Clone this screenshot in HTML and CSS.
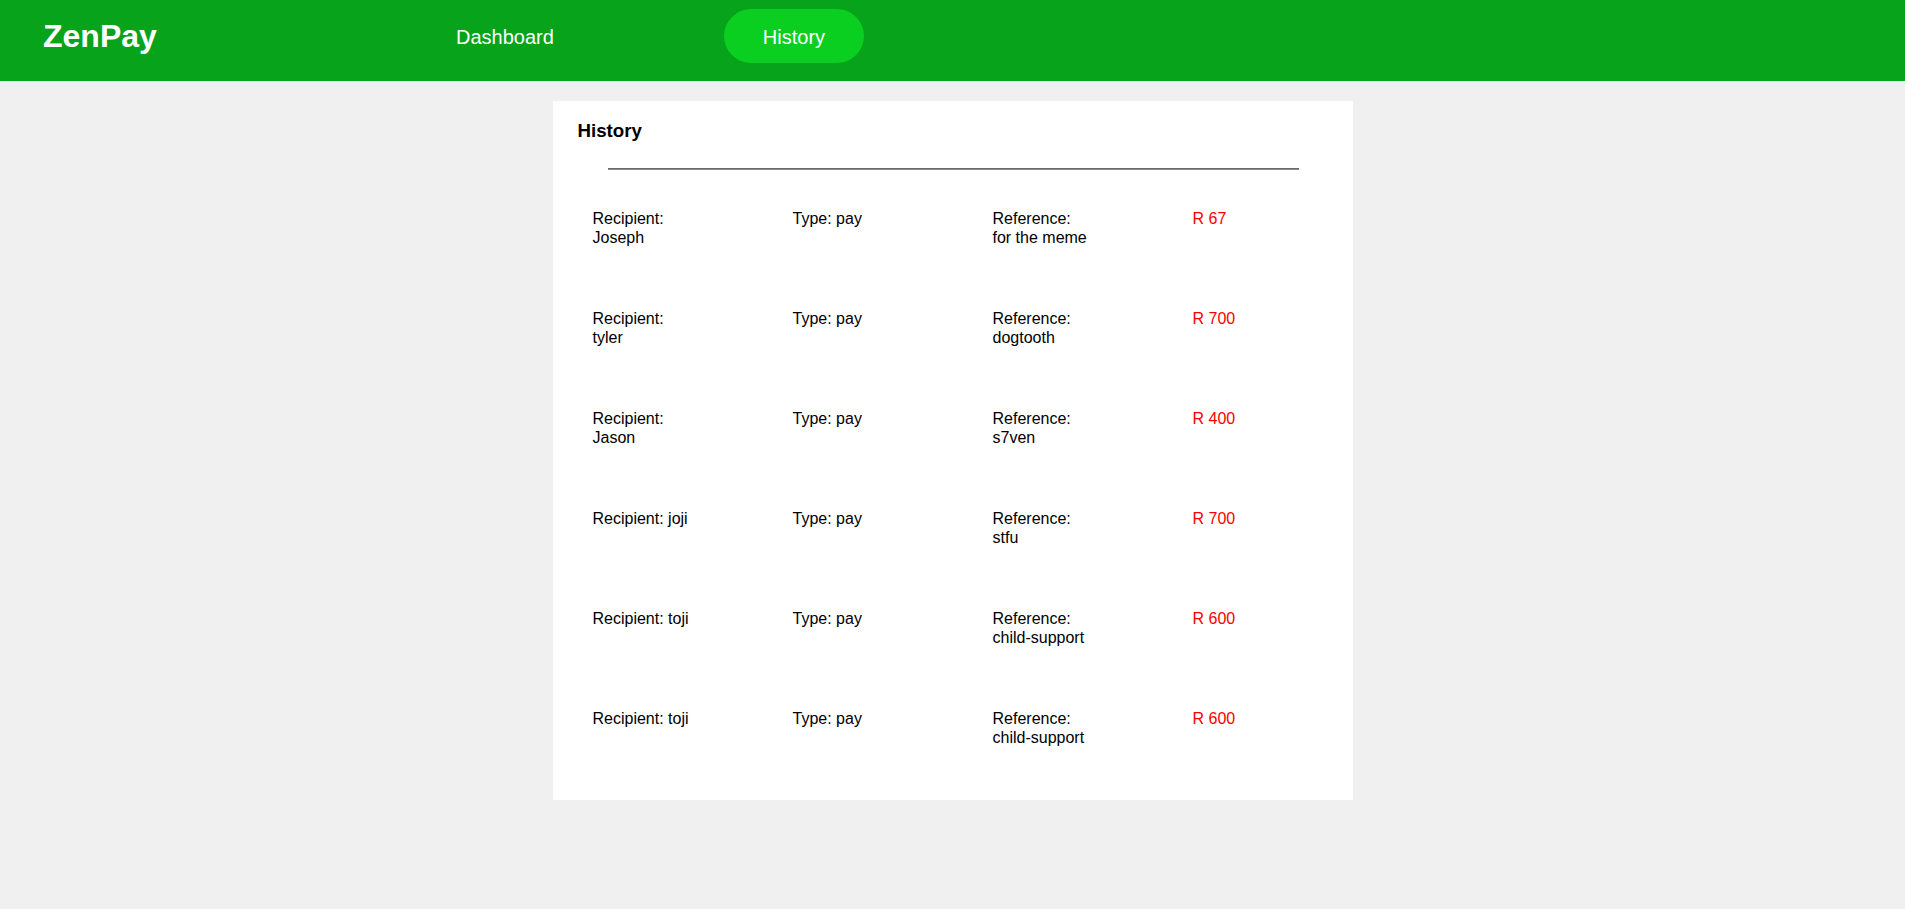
FILE: index.html
```html
<!DOCTYPE html>
<html>
<head>
<meta charset="utf-8">
<title>ZenPay - History</title>
<link rel="stylesheet" href="styles.css">
</head>
<body>
<header class="topbar">
  <div class="logo">ZenPay</div>
  <nav class="nav">
    <a class="nav-link" href="#">Dashboard</a>
    <a class="nav-link active" href="#">History</a>
  </nav>
</header>
<main class="page">
  <section class="card">
    <h3 class="card-title">History</h3>
    <div class="divider"></div>
    <div class="list">
      <div class="row">
        <div class="cell">Recipient:<br>Joseph</div>
        <div class="cell">Type: pay</div>
        <div class="cell">Reference:<br>for the meme</div>
        <div class="cell amount">R 67</div>
      </div>
      <div class="row">
        <div class="cell">Recipient:<br>tyler</div>
        <div class="cell">Type: pay</div>
        <div class="cell">Reference:<br>dogtooth</div>
        <div class="cell amount">R 700</div>
      </div>
      <div class="row">
        <div class="cell">Recipient:<br>Jason</div>
        <div class="cell">Type: pay</div>
        <div class="cell">Reference:<br>s7ven</div>
        <div class="cell amount">R 400</div>
      </div>
      <div class="row">
        <div class="cell">Recipient: joji</div>
        <div class="cell">Type: pay</div>
        <div class="cell">Reference:<br>stfu</div>
        <div class="cell amount">R 700</div>
      </div>
      <div class="row">
        <div class="cell">Recipient: toji</div>
        <div class="cell">Type: pay</div>
        <div class="cell">Reference:<br>child-support</div>
        <div class="cell amount">R 600</div>
      </div>
      <div class="row">
        <div class="cell">Recipient: toji</div>
        <div class="cell">Type: pay</div>
        <div class="cell">Reference:<br>child-support</div>
        <div class="cell amount">R 600</div>
      </div>
    </div>
  </section>
</main>
</body>
</html>
```
FILE: styles.css
```css
* { box-sizing: border-box; }
html, body {
  margin: 0;
  padding: 0;
}
body {
  background: #f0f0f0;
  font-family: "Liberation Sans", Arial, sans-serif;
  color: #000;
}
.topbar {
  background: #07a31a;
  height: 81px;
  display: flex;
  align-items: center;
  padding: 9px 0 18px 43px;
}
.logo {
  color: #fff;
  font-size: 32px;
  font-weight: bold;
  line-height: 1;
  width: 113px;
}
.nav {
  display: flex;
  align-items: center;
  gap: 131px;
  margin-left: 261px;
}
.nav-link {
  color: #fff;
  text-decoration: none;
  font-size: 20px;
  line-height: 23px;
  padding: 17px 39px 14px;
  border-radius: 27px;
}
.nav-link.active {
  background: #0acf20;
}
.page {
  padding-top: 20px;
  display: flex;
  justify-content: center;
}
.card {
  width: 800px;
  background: #fff;
  padding: 19px 0 53px;
}
.card-title {
  margin: 0 0 0 25px;
  font-size: 18.72px;
  font-weight: bold;
  line-height: 22px;
}
.divider {
  margin: 26px 54px 0 55px;
  border-top: 1px solid #6a6a6a;
  border-bottom: 1px solid #8a8a8a;
}
.list {
  padding: 40px 0 0 40px;
  display: flex;
  flex-direction: column;
  gap: 63px;
}
.row {
  display: grid;
  grid-template-columns: 200px 200px 200px 1fr;
  font-size: 16px;
  line-height: 18.5px;
}
.amount {
  color: #ff0000;
}
```
